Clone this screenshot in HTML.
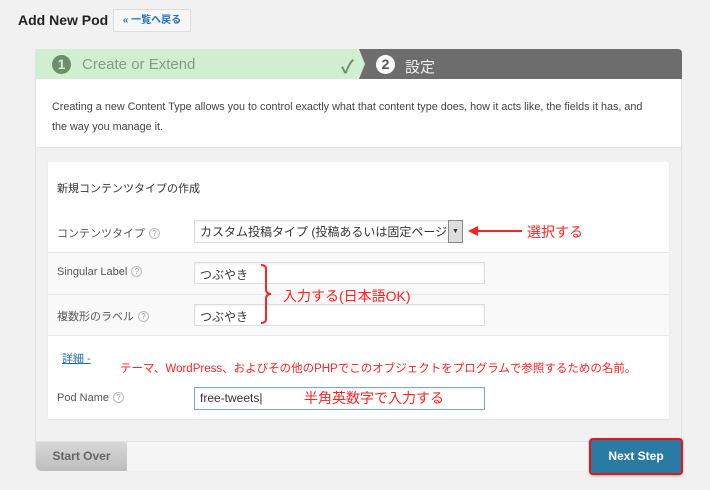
<!DOCTYPE html>
<html><head><meta charset="utf-8"><style>
*{margin:0;padding:0;box-sizing:border-box}
body{width:710px;height:490px;background:#f1f1f1;font-family:"Liberation Sans","Noto Sans CJK JP",sans-serif;position:relative;overflow:hidden;color:#333}
.a{position:absolute}
.lbl{font-size:11px;color:#555}
.q{display:inline-block;width:11px;height:11px;border:1px solid #bbb;border-radius:50%;font-size:8px;text-align:center;line-height:9px;color:#999;margin-left:4px;vertical-align:1px}
.inp{position:absolute;background:#fff;border:1px solid #ddd;box-shadow:inset 0 1px 2px rgba(0,0,0,.07);font-size:12px;padding:3px 5px;color:#333}
.red{color:#f22;position:absolute;font-size:14px}
</style></head><body>
<div class="a" style="left:18px;top:12px;font-size:14px;font-weight:bold;color:#222">Add New Pod</div>
<div class="a" style="left:113px;top:9px;width:78px;height:23px;background:#f7f7f7;border:1px solid #ddd;font-size:10px;color:#2271b1;line-height:21px;text-align:center;font-weight:bold">« 一覧へ戻る</div>

<div class="a" style="left:35px;top:49px;width:647px;height:422px;background:#f1f1f1;border:1px solid #e2e2e2;border-radius:4px 4px 6px 6px"></div>
<div class="a" style="left:35px;top:49px;width:647px;height:30px;background:#6d6d6d;border-radius:4px 4px 0 0"></div>
<svg class="a" style="left:35px;top:49px" width="340" height="30"><polygon points="0,0 324,0 330,15 324,30 0,30" fill="#d2eed0"/></svg>
<div class="a" style="left:52px;top:55px;width:19px;height:19px;border-radius:50%;background:#6a8f6a;color:#d2eed0;font-weight:bold;font-size:14px;text-align:center;line-height:19px">1</div>
<div class="a" style="left:82px;top:56px;font-size:15px;color:#7fa07f">Create or Extend</div>
<div class="a" style="left:341px;top:53px;font-size:18px;color:#6d8f6d;font-weight:bold">✓</div>
<div class="a" style="left:376px;top:55px;width:19px;height:19px;border-radius:50%;background:#fff;color:#555;font-weight:bold;font-size:14px;text-align:center;line-height:19px">2</div>
<div class="a" style="left:405px;top:56px;font-size:15px;color:#eee">設定</div>
<div class="a" style="left:36px;top:79px;width:645px;height:69px;background:#fff;border-bottom:1px solid #e5e5e5"></div>
<div class="a" style="left:52px;top:97px;width:605px;font-size:10.8px;line-height:20px;color:#444">Creating a new Content Type allows you to control exactly what that content type does, how it acts like, the fields it has, and the way you manage it.</div>

<div class="a" style="left:48px;top:162px;width:621px;height:257px;background:#fff;box-shadow:0 1px 1px rgba(0,0,0,.06)"></div>
<div class="a" style="left:48px;top:252px;width:621px;height:84px;background:#f9f9f9;border-top:1px solid #e8e8e8;border-bottom:1px solid #e8e8e8"></div>
<div class="a" style="left:48px;top:294px;width:621px;height:1px;background:#e8e8e8"></div>
<div class="a" style="left:57px;top:180px;font-size:11px;color:#333">新規コンテンツタイプの作成</div>
<div class="a lbl" style="left:57px;top:225px">コンテンツタイプ<span class="q">?</span></div>
<div class="inp" style="left:194px;top:220px;width:269px;height:23px;font-size:12px;padding:2px 5px;overflow:hidden;white-space:nowrap">カスタム投稿タイプ (投稿あるいは固定ページと</div>
<div class="a" style="left:448px;top:220px;width:15px;height:23px;background:#ddd;border:1px solid #888;font-size:7px;text-align:center;line-height:21px">▼</div>
<svg class="a" style="left:468px;top:224px" width="56" height="14"><line x1="8" y1="7" x2="54" y2="7" stroke="#f22" stroke-width="2"/><polygon points="0,7 10,2 10,12" fill="#f22"/></svg>
<div class="red" style="left:527px;top:222px">選択する</div>
<div class="a lbl" style="left:57px;top:266px">Singular Label<span class="q">?</span></div>
<div class="inp" style="left:194px;top:262px;width:291px;height:22px">つぶやき</div>
<div class="a lbl" style="left:57px;top:308px">複数形のラベル<span class="q">?</span></div>
<div class="inp" style="left:194px;top:304px;width:291px;height:22px">つぶやき</div>
<svg class="a" style="left:258px;top:264px" width="16" height="60"><path d="M3,1 Q8,1 8,5 L8,25 Q8,30 13,30 Q8,30 8,35 L8,55 Q8,59 3,59" fill="none" stroke="#f22" stroke-width="2"/></svg>
<div class="red" style="left:283px;top:286px">入力する(日本語OK)</div>
<div class="a" style="left:62px;top:350px;font-size:11px;color:#2271b1;text-decoration:underline">詳細 -</div>
<div class="red" style="left:120px;top:360px;font-size:11.5px">テーマ、WordPress、およびその他のPHPでこのオブジェクトをプログラムで参照するための名前。</div>
<div class="a lbl" style="left:57px;top:392px">Pod Name<span class="q">?</span></div>
<div class="inp" style="left:194px;top:387px;width:291px;height:23px;border-color:#7aa7d4">free-tweets|</div>
<div class="red" style="left:304px;top:388px">半角英数字で入力する</div>

<div class="a" style="left:36px;top:441px;width:645px;height:30px;background:#f5f5f5;border-top:1px solid #e3e3e3;border-radius:0 0 6px 6px"></div>
<div class="a" style="left:36px;top:442px;width:91px;height:29px;background:linear-gradient(#d8d8d8,#bdbdbd);border-radius:0 0 0 6px;font-size:12px;font-weight:bold;color:#666;text-align:center;line-height:29px">Start Over</div>
<div class="a" style="left:589px;top:438px;width:94px;height:37px;border:2px solid #e0161b;border-radius:4px;background:#2a7ba3;color:#fff;font-size:12px;font-weight:bold;text-align:center;line-height:33px;box-shadow:0 1px 2px rgba(0,0,0,.3)">Next Step</div>
</body></html>
